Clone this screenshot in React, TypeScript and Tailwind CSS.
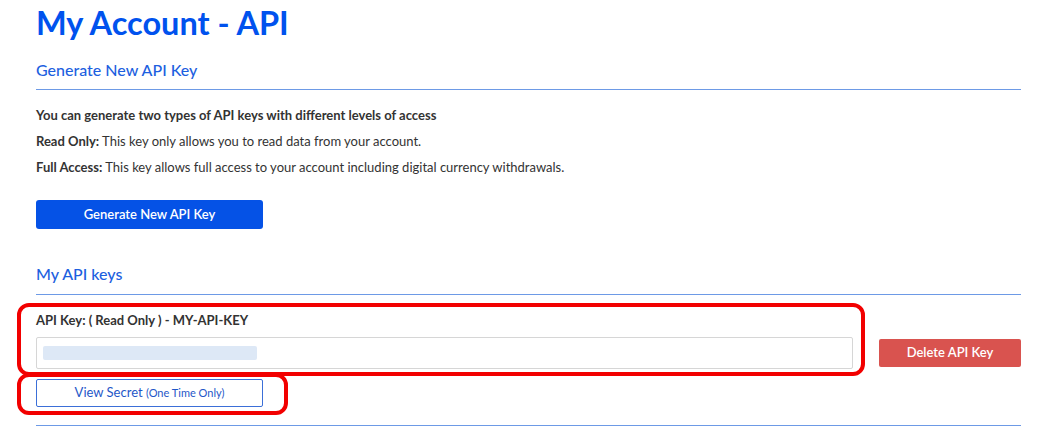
import React from 'react';

const font = { fontFamily: 'Lato, "Open Sans", sans-serif' };

const App = () => {
  return (
    <div className="relative w-[1039px] h-[432px] overflow-hidden bg-white pl-9 pr-[18px] text-[#333]" style={font}>
      <h1 className="pt-[3px] text-[32.5px] leading-[40px] font-bold text-[#0052ee]">My Account - API</h1>
      <h2 className="mt-[17px] text-[16px] leading-[20px] font-medium text-[#1d5fe0]">Generate New API Key</h2>
      <div className="mt-[9px] border-t border-[#6d9ae6]" />

      <p className="mt-[15px] text-[13px] leading-[20px] font-bold">
        You can generate two types of API keys with different levels of access
      </p>
      <p className="mt-[6px] text-[13px] leading-[20px]">
        <span className="font-bold">Read Only:</span> This key only allows you to read data from your account.
      </p>
      <p className="mt-[6px] text-[13px] leading-[20px]">
        <span className="font-bold">Full Access:</span> This key allows full access to your account including digital currency withdrawals.
      </p>

      <button className="mt-[23px] block h-[29px] w-[227px] rounded-[3px] bg-[#0552e6] text-[13px] font-semibold text-white">
        Generate New API Key
      </button>

      <h2 className="mt-[35px] text-[16px] leading-[20px] font-medium text-[#1d5fe0]">My API keys</h2>
      <div className="mt-[10px] border-t border-[#6d9ae6]" />

      <div className="mt-[15px] text-[13px] leading-[20px] font-bold">API Key: ( Read Only ) - MY-API-KEY</div>
      <div className="mt-[7px] flex items-center">
        <div className="h-[32px] flex-1 rounded-[2px] border border-[#d6d6d6] pl-[6px] pt-[8px]">
          <div className="h-[14px] w-[214px] rounded-[2px] bg-[#dde8f6]" />
        </div>
        <button className="ml-[26px] h-[28px] w-[142px] rounded-[2px] bg-[#d9534f] text-[13px] font-semibold text-white">
          Delete API Key
        </button>
      </div>

      <button className="mt-[10px] block h-[28px] w-[227px] rounded-[2px] border border-[#3b6fd8] bg-white text-[13px] text-[#1f57c8]">
        View Secret <span className="text-[11px]">(One Time Only)</span>
      </button>
      <div className="mt-[18px] border-t border-[#6d9ae6]" />

      <div className="pointer-events-none absolute left-[17px] top-[303px] h-[73px] w-[848px] rounded-[12px] border-4 border-[#f20000]" />
      <div className="pointer-events-none absolute left-[17px] top-[373px] h-[42px] w-[271px] rounded-[12px] border-4 border-[#f20000]" />
    </div>
  );
};

export default App;
